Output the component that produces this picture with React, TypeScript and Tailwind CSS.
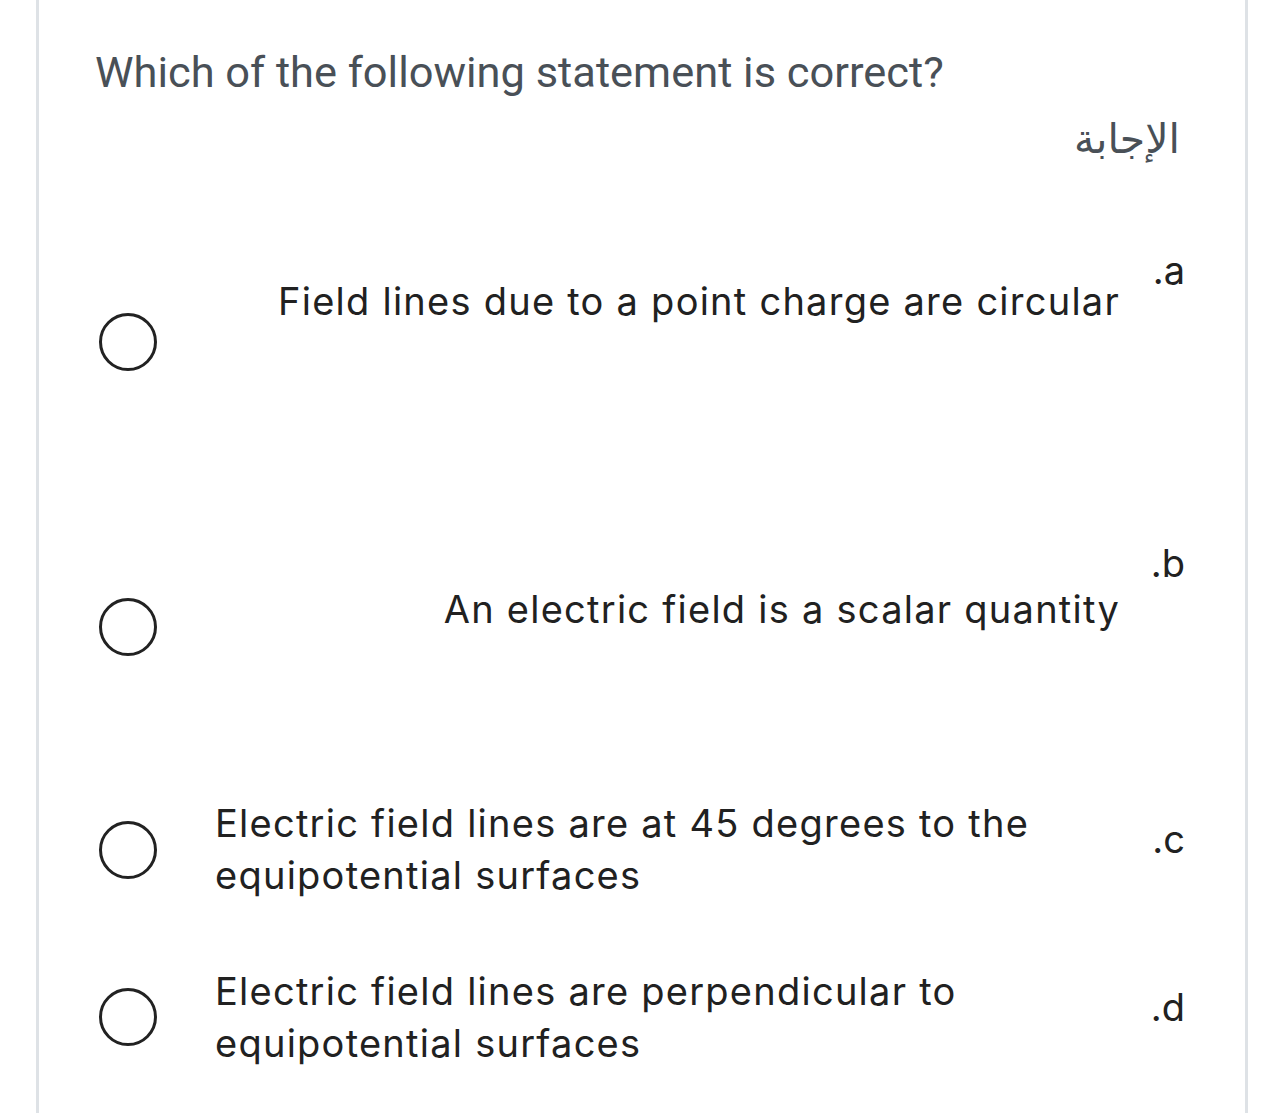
const options = [
  {
    key: "a",
    text: "Field lines due to a point charge are circular",
    align: "text-right",
    row: "h-[290px]",
    labelTop: "mt-[8px]",
    textTop: "mt-[35px]",
    radioTop: "mt-[73px]",
  },
  {
    key: "b",
    text: "An electric field is a scalar quantity",
    align: "text-right",
    row: "h-[260px]",
    labelTop: "mt-[11px]",
    textTop: "mt-[53px]",
    radioTop: "mt-[68px]",
  },
  {
    key: "c",
    text: "Electric field lines are at 45 degrees to the equipotential surfaces",
    align: "text-left",
    row: "h-[170px]",
    labelTop: "mt-[27px]",
    textTop: "mt-[7px]",
    radioTop: "mt-[31px]",
  },
  {
    key: "d",
    text: "Electric field lines are perpendicular to equipotential surfaces",
    align: "text-left",
    row: "h-[153px]",
    labelTop: "mt-[25px]",
    textTop: "mt-[5px]",
    radioTop: "mt-[28px]",
  },
];

export default function App() {
  return (
    <div className="min-h-[1113px] bg-white">
      <div className="ml-[36px] w-[1212px] min-h-[1113px] border-x-[3px] border-[#dee2e6] bg-white">
        {/* Question header */}
        <div className="h-[240px] pl-[56px] pr-[65px]">
          <p
            className="pt-[47px] text-[43.4px] leading-[52px] text-[#495057]"
            style={{ fontFamily: "Roboto, 'Liberation Sans', sans-serif" }}
          >
            Which of the following statement is correct?
          </p>
          <p
            dir="rtl"
            className="mt-[10px] text-[41px] leading-[60px] text-[#495057]"
            style={{ fontFamily: "'DejaVu Sans', sans-serif" }}
          >
            الإجابة
          </p>
        </div>

        {/* Answers */}
        <div style={{ fontFamily: "Inter, 'Liberation Sans', sans-serif" }}>
          {options.map((o) => (
            <div key={o.key} className={`flex items-start pl-[60px] pr-[60px] ${o.row}`}>
              <div
                className={`h-[58px] w-[58px] shrink-0 rounded-full border-[3px] border-[#222222] ${o.radioTop}`}
              />
              <div
                className={`ml-[58px] flex-1 text-[38px] leading-[52px] tracking-[1.25px] text-[#212121] ${o.align} ${o.textTop}`}
              >
                {o.text}
              </div>
              <span
                dir="rtl"
                className={`ml-[33px] w-[32px] text-[38px] leading-[44px] text-[#212121] ${o.labelTop}`}
              >
                {o.key}.
              </span>
            </div>
          ))}
        </div>
      </div>
    </div>
  );
}
